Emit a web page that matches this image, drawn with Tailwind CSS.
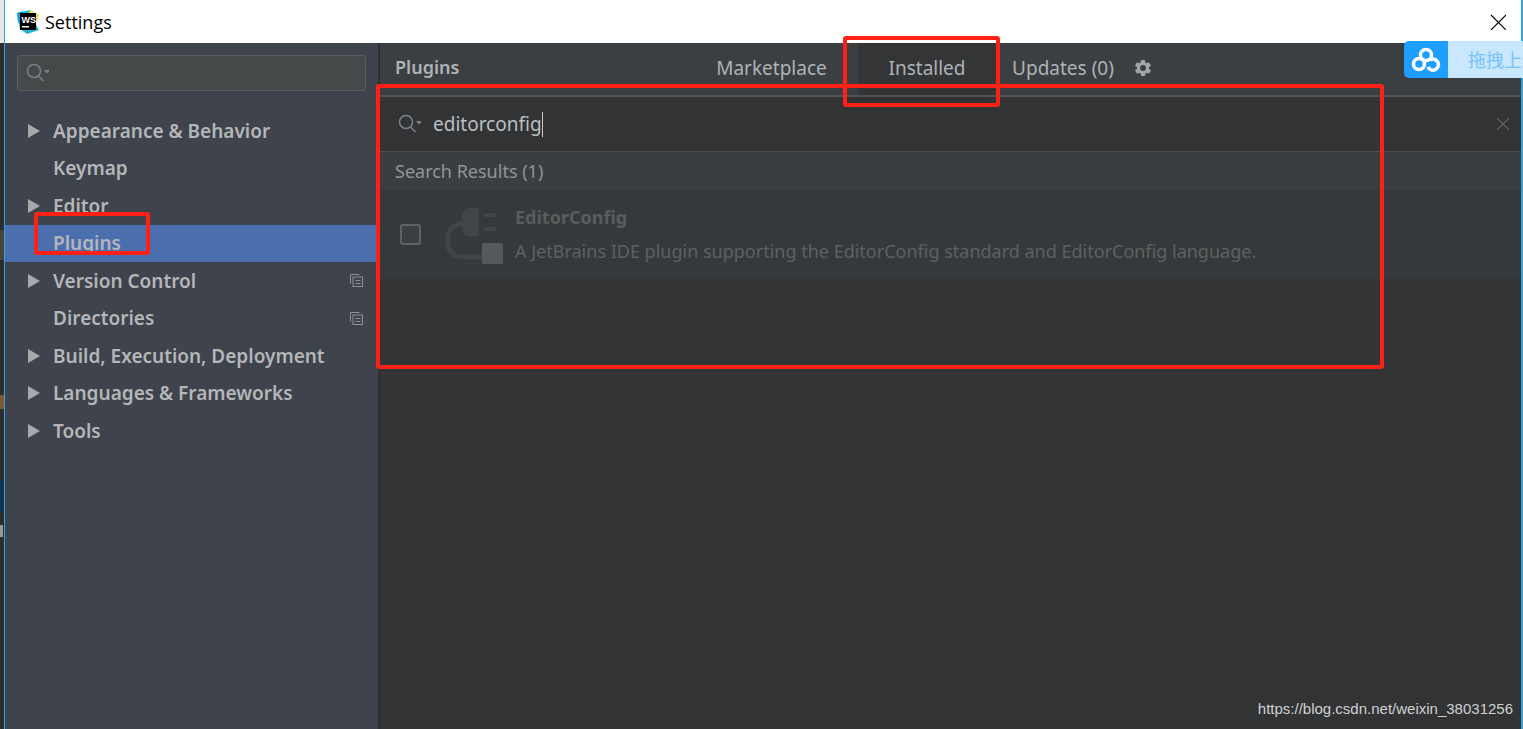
<!DOCTYPE html>
<html lang="en">
<head>
    <meta charset="UTF-8">
    <title>Settings</title>
    <script src="https://cdn.jsdelivr.net/npm/@tailwindcss/browser@4"></script>
</head>
<body class="relative w-[1523px] h-[729px] overflow-hidden bg-white font-['Noto_Sans','Open_Sans',sans-serif]">
    <div class="flex h-full">
        <!-- desktop peeking out behind the dialog -->
        <div class="relative w-[4px] shrink-0 bg-[#2b2d30]">
            <div class="h-[43px] bg-[#e8e8e8]"></div>
            <div class="absolute left-0 top-[230px] w-[4px] h-[30px] bg-[#4a4438]"></div>
            <div class="absolute left-0 top-[395px] w-[4px] h-[14px] bg-[#7a5a30]"></div>
            <div class="absolute left-0 top-[480px] w-[4px] h-[32px] bg-[#12344e]"></div>
            <div class="absolute left-0 top-[525px] w-[3px] h-[12px] bg-[#9a9a9a]"></div>
        </div>
        <div class="w-[1px] shrink-0 bg-[#3aa0d8]"></div>

        <div class="flex flex-col w-[1516px] shrink-0">
            <!-- title bar -->
            <div class="flex items-center h-[43px] shrink-0 bg-white pl-[11px] pr-[15px]">
                <svg class="w-[24px] h-[26px] shrink-0" viewBox="0 0 24 26">
                    <polygon points="1,4 14,1 23,6 19,14 23,21 11,25 4,20" fill="#1fb6d8"/>
                    <polygon points="14,1 23,6 20,13 12,6" fill="#f7e24b"/>
                    <polygon points="1,4 7,2 6,12 2,14" fill="#19a0d6"/>
                    <rect x="4" y="4" width="16" height="17" fill="#000"/>
                    <rect x="6" y="17" width="7" height="1.5" fill="#fff"/>
                    <text x="5.5" y="13.5" font-size="9" font-weight="700" fill="#fff" font-family="Liberation Sans">WS</text>
                </svg>
                <span class="ml-[5px] text-[18px] leading-none text-black font-['Open_Sans',sans-serif]">Settings</span>
                <svg class="ml-auto w-[16px] h-[16px] mr-[0px]" viewBox="0 0 16 16" fill="none" stroke="#000" stroke-width="1.1"><path d="M1 1l15 15M16 1L1 16"/></svg>
            </div>

            <div class="flex flex-1 min-h-0">
                <!-- sidebar -->
                <aside class="w-[373px] shrink-0 bg-[#3e434c] text-[#b4b6b8] text-[19px] font-semibold">
                    <div class="mx-[12px] mt-[12px] mb-[21px] h-[36px] flex items-center gap-[1px] pl-[7px] rounded-[3px] border border-[#5a5e60] bg-[#45494a]">
                        <svg class="w-[24px] h-[20px]" viewBox="0 0 24 20" fill="none" stroke="#7d8184" stroke-width="1.5"><circle cx="9" cy="8" r="6.5"/><path d="M13.5 13l5 5"/><path d="M19 7h6l-3 3.5z" fill="#7d8184" stroke="none"/></svg>
                    </div>
                    <div class="flex items-center h-[37.5px] pl-[23px]"><svg class="w-[12px] h-[14px] mr-[13px]" viewBox="0 0 12 14"><path d="M0 0l12 7-12 7z" fill="#a8a9aa"/></svg>Appearance &amp; Behavior</div>
                    <div class="flex items-center h-[37.5px] pl-[48px]">Keymap</div>
                    <div class="flex items-center h-[37.5px] pl-[23px]"><svg class="w-[12px] h-[14px] mr-[13px]" viewBox="0 0 12 14"><path d="M0 0l12 7-12 7z" fill="#a8a9aa"/></svg>Editor</div>
                    <div class="flex items-center h-[37.5px] pl-[48px] bg-[#4b6eaf]">Plugins</div>
                    <div class="flex items-center h-[37.5px] pl-[23px] pr-[15px]"><svg class="w-[12px] h-[14px] mr-[13px]" viewBox="0 0 12 14"><path d="M0 0l12 7-12 7z" fill="#a8a9aa"/></svg>Version Control
                        <svg class="ml-auto w-[13px] h-[13px]" viewBox="0 0 13 13" fill="none" stroke="#8f9294" stroke-width="1"><path d="M.5 9.5v-9h9"/><rect x="3" y="3" width="9.5" height="9.5"/><path d="M5.5 6.5h5M5.5 9.5h5"/></svg>
                    </div>
                    <div class="flex items-center h-[37.5px] pl-[48px] pr-[15px]">Directories
                        <svg class="ml-auto w-[13px] h-[13px]" viewBox="0 0 13 13" fill="none" stroke="#8f9294" stroke-width="1"><path d="M.5 9.5v-9h9"/><rect x="3" y="3" width="9.5" height="9.5"/><path d="M5.5 6.5h5M5.5 9.5h5"/></svg>
                    </div>
                    <div class="flex items-center h-[37.5px] pl-[23px]"><svg class="w-[12px] h-[14px] mr-[13px]" viewBox="0 0 12 14"><path d="M0 0l12 7-12 7z" fill="#a8a9aa"/></svg>Build, Execution, Deployment</div>
                    <div class="flex items-center h-[37.5px] pl-[23px]"><svg class="w-[12px] h-[14px] mr-[13px]" viewBox="0 0 12 14"><path d="M0 0l12 7-12 7z" fill="#a8a9aa"/></svg>Languages &amp; Frameworks</div>
                    <div class="flex items-center h-[37.5px] pl-[23px]"><svg class="w-[12px] h-[14px] mr-[13px]" viewBox="0 0 12 14"><path d="M0 0l12 7-12 7z" fill="#a8a9aa"/></svg>Tools</div>
                </aside>
                <div class="w-[2px] shrink-0 bg-[#2f3032]"></div>

                <!-- plugins panel -->
                <main class="flex-1 min-w-0 flex flex-col bg-[#323335]">
                    <div class="flex items-stretch h-[52px] shrink-0 bg-[#3c3f41] text-[#aeb3b6] text-[19px]">
                        <div class="w-[305px] pl-[15px] flex items-center font-semibold text-[18px] pb-[3px]">Plugins</div>
                        <div class="w-[173px] flex items-center justify-center pb-[2px] pr-[0px]">Marketplace</div>
                        <div class="w-[138px] flex items-center justify-center pb-[2px] bg-[#343537]">Installed</div>
                        <div class="w-[130px] ml-[2px] flex items-center justify-center pb-[2px]">Updates (0)</div>
                        <div class="flex items-center ml-[5px] pb-[2px]">
                            <svg class="w-[20px] h-[20px]" viewBox="0 0 24 24"><path fill="#a3a5a6" d="M19.14 12.94a7.5 7.5 0 0 0 0-1.88l2.03-1.58a.5.5 0 0 0 .12-.64l-1.92-3.32a.5.5 0 0 0-.6-.22l-2.39.96a7 7 0 0 0-1.62-.94l-.36-2.54a.5.5 0 0 0-.5-.42h-3.84a.5.5 0 0 0-.5.42l-.36 2.54a7 7 0 0 0-1.62.94l-2.39-.96a.5.5 0 0 0-.6.22L2.71 8.84a.5.5 0 0 0 .12.64l2.03 1.58a7.5 7.5 0 0 0 0 1.88l-2.03 1.58a.5.5 0 0 0-.12.64l1.92 3.32a.5.5 0 0 0 .6.22l2.39-.96c.5.38 1.04.7 1.62.94l.36 2.54a.5.5 0 0 0 .5.42h3.84a.5.5 0 0 0 .5-.42l.36-2.54a7 7 0 0 0 1.62-.94l2.39.96a.5.5 0 0 0 .6-.22l1.92-3.32a.5.5 0 0 0-.12-.64zM12 15.5a3.5 3.5 0 1 1 0-7 3.5 3.5 0 0 1 0 7z"/></svg>
                        </div>
                    </div>
                    <div class="h-[2px] shrink-0 bg-[#505254]"></div>
                    <div class="flex items-center h-[54px] shrink-0 pl-[17px] pr-[12px]">
                        <svg class="w-[24px] h-[20px] shrink-0" viewBox="0 0 24 20" fill="none" stroke="#7d8184" stroke-width="1.5"><circle cx="9" cy="8" r="6.5"/><path d="M13.5 13l5 5"/><path d="M19 7h6l-3 3.5z" fill="#7d8184" stroke="none"/></svg>
                        <span class="ml-[12px] text-[19px] leading-none text-[#bcbfc1]">editorconfig</span>
                        <span class="w-[1px] h-[25px] bg-[#c8c8c8]"></span>
                        <svg class="ml-auto w-[12px] h-[12px]" viewBox="0 0 12 12" fill="none" stroke="#5e6062" stroke-width="1.3"><path d="M0 0l12 12M12 0L0 12"/></svg>
                    </div>
                    <div class="h-[1px] shrink-0 bg-[#4b4d4f]"></div>
                    <div class="flex items-center h-[38px] shrink-0 pl-[15px] bg-[#3a3e41] text-[18px] text-[#8f9599]">Search Results (1)</div>
                    <div class="flex items-center h-[89px] shrink-0 pl-[20px] bg-[#36393b]">
                        <div class="w-[21px] h-[21px] shrink-0 rounded-[3px] border-2 border-[#5f6264] bg-[#3c3f41] mt-[0px]"></div>
                        <svg class="ml-[22px] w-[60px] h-[60px] shrink-0" viewBox="0 0 60 60" fill="none">
                            <path d="M19 19a14 14 0 0 0-14 14v6a14 14 0 0 0 14 13h20" stroke="#414548" stroke-width="5"/>
                            <path d="M26 3h10v28H26a7 7 0 0 1-7-7V10a7 7 0 0 1 7-7z" fill="#414548"/>
                            <rect x="41" y="8" width="12" height="4" fill="#414548"/>
                            <rect x="41" y="22" width="12" height="4" fill="#414548"/>
                            <rect x="39" y="38" width="21" height="21" fill="#565859"/>
                        </svg>
                        <div class="ml-[12px] mt-[-1px]">
                            <div class="text-[18px] leading-[25px] font-bold text-[#5a5c5e]">EditorConfig</div>
                            <div class="mt-[9px] text-[18px] leading-[25px] text-[#5e6062]">A JetBrains IDE plugin supporting the EditorConfig standard and EditorConfig language.</div>
                        </div>
                    </div>
                </main>
            </div>
        </div>
        <div class="w-[2px] shrink-0 bg-[#3aa0d8]"></div>
    </div>

    <!-- annotations and overlays drawn on top of the screenshot -->
    <div class="absolute left-[34px] top-[212px] w-[116px] h-[43px] rounded-[3px] border-[4px] border-[#ff2116]"></div>
    <div class="absolute left-[843px] top-[36px] w-[157px] h-[71px] rounded-[3px] border-[4px] border-[#ff2116]"></div>
    <div class="absolute left-[376px] top-[84px] w-[1008px] h-[285px] rounded-[3px] border-[4px] border-[#ff2116]"></div>

    <div class="absolute left-[1404px] top-[41px] w-[119px] h-[37px] flex overflow-hidden rounded-l-[5px]">
        <div class="w-[44px] flex items-center justify-center bg-[#1e9fff]">
            <svg class="w-[30px] h-[26px]" viewBox="0 0 30 26" fill="none" stroke="#fff" stroke-width="3.5"><circle cx="15" cy="8" r="5.5"/><circle cx="8" cy="17" r="5.5"/><path d="M17 20a5.5 5.5 0 1 0 2-7"/></svg>
        </div>
        <div class="flex-1 flex items-center pl-[20px] bg-[#c9e8ff] text-[18px] text-[#76c2fb] whitespace-nowrap overflow-hidden font-['Noto_Sans_CJK_SC',sans-serif]">拖拽上传</div>
    </div>

    <div class="absolute right-[10px] top-[699px] text-[15px] leading-[20px] text-[#d0d0d0] font-['Liberation_Sans',sans-serif]">https://blog.csdn.net/weixin_38031256</div>
</body>
</html>
